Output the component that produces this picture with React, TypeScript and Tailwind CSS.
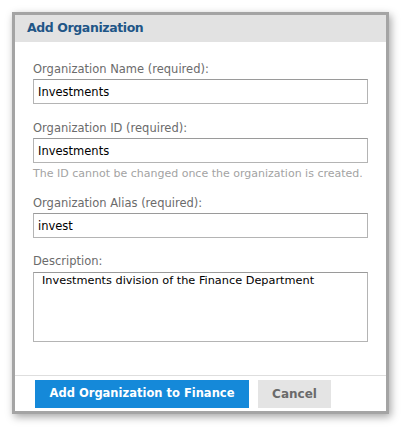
import { useState } from 'react';

const font = "font-['DejaVu_Sans',Verdana,sans-serif]";

function Field({ label, value, onChange }: { label: string; value: string; onChange: (v: string) => void }) {
  return (
    <div>
      <label className="block text-[11.5px] leading-[14px] text-[#6b6b6b]">{label}</label>
      <input
        value={value}
        onChange={(e) => onChange(e.target.value)}
        className="mt-[3px] block h-[25px] w-full border border-[#b4b4b4] border-t-[#9a9a9a] bg-white px-[4px] text-[11.5px] text-black outline-none"
      />
    </div>
  );
}

export default function App() {
  const [name, setName] = useState('Investments');
  const [id, setId] = useState('Investments');
  const [alias, setAlias] = useState('invest');
  const [desc, setDesc] = useState('Investments division of the Finance Department');

  return (
    <div className={`min-h-[427px] bg-white pl-[12px] pt-[12px] ${font}`}>
      <div className="flex h-[402px] w-[377px] flex-col border-[3px] border-[#a4a4a4] bg-white shadow-[2px_3px_8px_rgba(0,0,0,0.35)]">
        <div className="flex h-[27px] shrink-0 items-center bg-[#e2e2e2] pl-[12px]">
          <h2 className="text-[12.5px] font-bold tracking-[-0.4px] text-[#1f5687]">Add Organization</h2>
        </div>

        <div className="flex flex-1 flex-col px-[18px] pt-[20px]">
          <Field label="Organization Name (required):" value={name} onChange={setName} />
          <div className="mt-[17px]">
            <Field label="Organization ID (required):" value={id} onChange={setId} />
            <p className="mt-[4px] text-[11px] leading-[14px] text-[#a3a3a3]">
              The ID cannot be changed once the organization is created.
            </p>
          </div>
          <div className="mt-[15px]">
            <Field label="Organization Alias (required):" value={alias} onChange={setAlias} />
          </div>
          <div className="mt-[16px]">
            <label className="block text-[11.5px] leading-[14px] text-[#6b6b6b]">Description:</label>
            <textarea
              value={desc}
              onChange={(e) => setDesc(e.target.value)}
              className="mt-[4px] block h-[70px] w-full resize-none border border-[#b4b4b4] border-t-[#9a9a9a] bg-white px-[8px] pt-0 text-[11.3px] leading-[16px] text-black outline-none"
            />
          </div>
        </div>

        <div className="flex shrink-0 gap-[9px] border-t border-[#dedede] pb-[3px] pl-[20px] pt-[4px]">
          <button className="h-[28px] w-[214px] bg-[#1589d9] text-[11.5px] font-bold text-white">
            Add Organization to Finance
          </button>
          <button className="h-[28px] w-[73px] bg-[#e4e4e4] text-[12px] font-bold text-[#6a6a6a]">
            Cancel
          </button>
        </div>
      </div>
    </div>
  );
}
